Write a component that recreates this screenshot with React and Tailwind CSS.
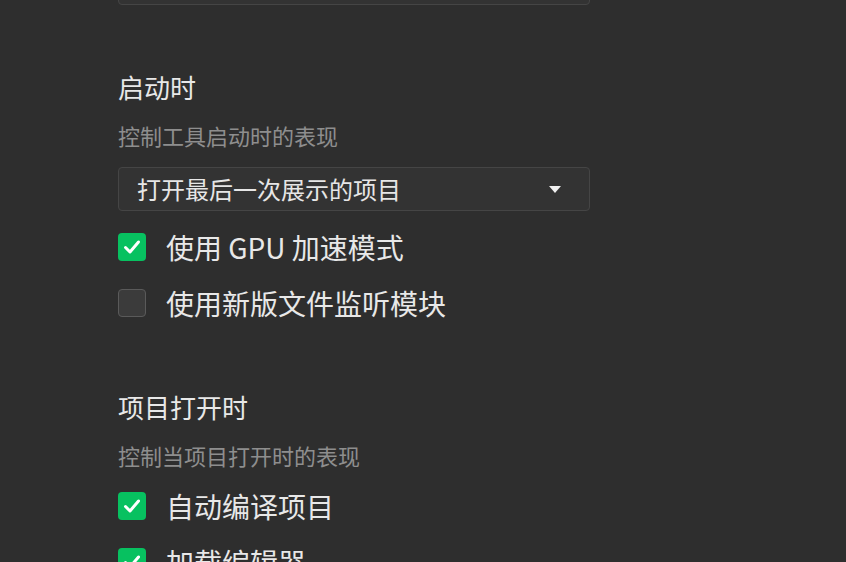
const settings = [
  {
    title: "启动时",
    desc: "控制工具启动时的表现",
    select: "打开最后一次展示的项目",
    options: [
      { label: "使用 GPU 加速模式", checked: true },
      { label: "使用新版文件监听模块", checked: false },
    ],
  },
  {
    title: "项目打开时",
    desc: "控制当项目打开时的表现",
    options: [
      { label: "自动编译项目", checked: true },
      { label: "加载编辑器", checked: true },
    ],
  },
];

const Checkbox = ({ checked }) =>
  checked ? (
    <span className="flex h-[28px] w-[28px] shrink-0 items-center justify-center rounded-[4px] bg-[#07c160]">
      <svg width="20" height="20" viewBox="0 0 20 20" fill="none">
        <path d="M3.5 10.5 L8 15 L16.5 5" stroke="#fff" strokeWidth="3" strokeLinecap="round" strokeLinejoin="round" />
      </svg>
    </span>
  ) : (
    <span className="h-[28px] w-[28px] shrink-0 rounded-[4px] border border-[#5a5a5a] bg-[#3b3b3b]" />
  );

const Section = ({ item, first }) => (
  <section className={first ? "mt-[64px]" : "mt-[72px]"}>
    <h2 className="text-[26px] leading-[36px] text-[#e8e8e8]">{item.title}</h2>
    <p className="mt-[15px] text-[22px] leading-[30px] text-[#8e8e8e]">{item.desc}</p>

    {item.select && (
      <div className="mt-[17px] flex h-[44px] w-[472px] items-center justify-between rounded-[4px] border border-[#454545] bg-[#333333] pl-[18px] pr-[28px]">
        <span className="text-[24px] leading-[32px] text-[#e6e6e6]">{item.select}</span>
        <svg width="12" height="7" viewBox="0 0 12 7">
          <path d="M0 0 H12 L6 7 Z" fill="#f0f0f0" />
        </svg>
      </div>
    )}

    <div className={`flex flex-col gap-[28px] ${item.select ? "mt-[22px]" : "mt-[22px]"}`}>
      {item.options.map((o) => (
        <label key={o.label} className="flex h-[28px] items-center gap-[20px]">
          <Checkbox checked={o.checked} />
          <span className="text-[28px] leading-[28px] text-[#e8e8e8]">{o.label}</span>
        </label>
      ))}
    </div>
  </section>
);

export default function App() {
  return (
    <div
      className="h-[562px] w-[846px] overflow-hidden bg-[#2e2e2e] pl-[118px]"
      style={{ fontFamily: '"Noto Sans CJK SC", "Noto Sans", sans-serif' }}
    >
      {/* previous field, scrolled mostly off screen */}
      <div className="-mt-[40px] h-[45px] w-[472px] rounded-[4px] border border-[#454545] bg-[#333333]" />
      {settings.map((s, i) => (
        <Section key={s.title} item={s} first={i === 0} />
      ))}
    </div>
  );
}
